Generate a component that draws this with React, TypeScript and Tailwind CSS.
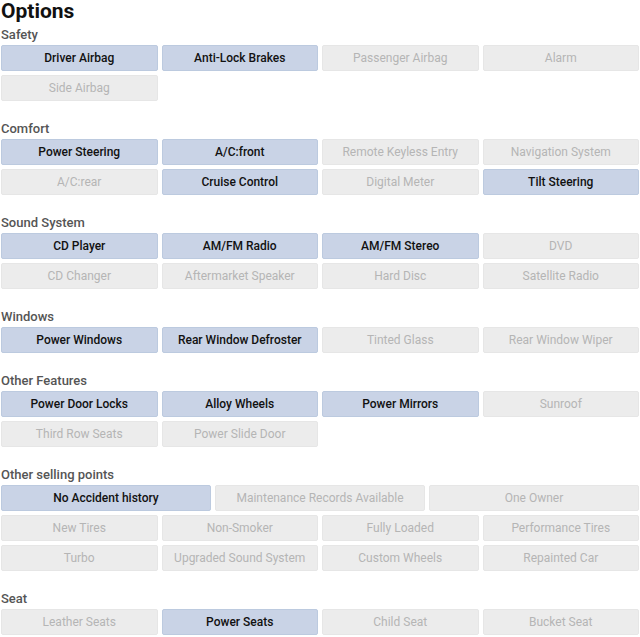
import React from "react";

type Opt = { label: string; on?: boolean };

interface Section {
  title: string;
  rows: { cols: 3 | 4; items: Opt[] }[];
}

const sections: Section[] = [
  {
    title: "Safety",
    rows: [
      {
        cols: 4,
        items: [
          { label: "Driver Airbag", on: true },
          { label: "Anti-Lock Brakes", on: true },
          { label: "Passenger Airbag" },
          { label: "Alarm" },
        ],
      },
      { cols: 4, items: [{ label: "Side Airbag" }] },
    ],
  },
  {
    title: "Comfort",
    rows: [
      {
        cols: 4,
        items: [
          { label: "Power Steering", on: true },
          { label: "A/C:front", on: true },
          { label: "Remote Keyless Entry" },
          { label: "Navigation System" },
        ],
      },
      {
        cols: 4,
        items: [
          { label: "A/C:rear" },
          { label: "Cruise Control", on: true },
          { label: "Digital Meter" },
          { label: "Tilt Steering", on: true },
        ],
      },
    ],
  },
  {
    title: "Sound System",
    rows: [
      {
        cols: 4,
        items: [
          { label: "CD Player", on: true },
          { label: "AM/FM Radio", on: true },
          { label: "AM/FM Stereo", on: true },
          { label: "DVD" },
        ],
      },
      {
        cols: 4,
        items: [
          { label: "CD Changer" },
          { label: "Aftermarket Speaker" },
          { label: "Hard Disc" },
          { label: "Satellite Radio" },
        ],
      },
    ],
  },
  {
    title: "Windows",
    rows: [
      {
        cols: 4,
        items: [
          { label: "Power Windows", on: true },
          { label: "Rear Window Defroster", on: true },
          { label: "Tinted Glass" },
          { label: "Rear Window Wiper" },
        ],
      },
    ],
  },
  {
    title: "Other Features",
    rows: [
      {
        cols: 4,
        items: [
          { label: "Power Door Locks", on: true },
          { label: "Alloy Wheels", on: true },
          { label: "Power Mirrors", on: true },
          { label: "Sunroof" },
        ],
      },
      {
        cols: 4,
        items: [{ label: "Third Row Seats" }, { label: "Power Slide Door" }],
      },
    ],
  },
  {
    title: "Other selling points",
    rows: [
      {
        cols: 3,
        items: [
          { label: "No Accident history", on: true },
          { label: "Maintenance Records Available" },
          { label: "One Owner" },
        ],
      },
      {
        cols: 4,
        items: [
          { label: "New Tires" },
          { label: "Non-Smoker" },
          { label: "Fully Loaded" },
          { label: "Performance Tires" },
        ],
      },
      {
        cols: 4,
        items: [
          { label: "Turbo" },
          { label: "Upgraded Sound System" },
          { label: "Custom Wheels" },
          { label: "Repainted Car" },
        ],
      },
    ],
  },
  {
    title: "Seat",
    rows: [
      {
        cols: 4,
        items: [
          { label: "Leather Seats" },
          { label: "Power Seats", on: true },
          { label: "Child Seat" },
          { label: "Bucket Seat" },
        ],
      },
    ],
  },
];

function OptionButton({ opt }: { opt: Opt }) {
  return (
    <div
      className={
        opt.on
          ? "h-[26px] flex items-center justify-center rounded-[2px] border border-[#bccadf] bg-[#c9d3e6] text-[12px] font-medium text-[#111]"
          : "h-[26px] flex items-center justify-center rounded-[2px] border border-[#e6e6e6] bg-[#ececec] text-[12px] text-[#b5b5b5]"
      }
    >
      {opt.label}
    </div>
  );
}

export default function App() {
  return (
    <div
      className="w-[640px] bg-white px-px"
      style={{ fontFamily: "Roboto, 'Liberation Sans', sans-serif" }}
    >
      <h1 className="text-[21px] leading-[20px] font-bold text-[#111] pt-px">Options</h1>
      {sections.map((s, i) => (
        <div key={s.title} className={i === 0 ? "mt-[4px]" : "mt-[18px]"}>
          <div className="text-[13px] leading-[20px] font-medium text-[#555]">{s.title}</div>
          <div className="flex flex-col gap-[4px]">
            {s.rows.map((r, j) => (
              <div
                key={j}
                className={r.cols === 3 ? "grid grid-cols-3 gap-[4px]" : "grid grid-cols-4 gap-[4px]"}
              >
                {r.items.map((o) => (
                  <OptionButton key={o.label} opt={o} />
                ))}
              </div>
            ))}
          </div>
        </div>
      ))}
    </div>
  );
}
